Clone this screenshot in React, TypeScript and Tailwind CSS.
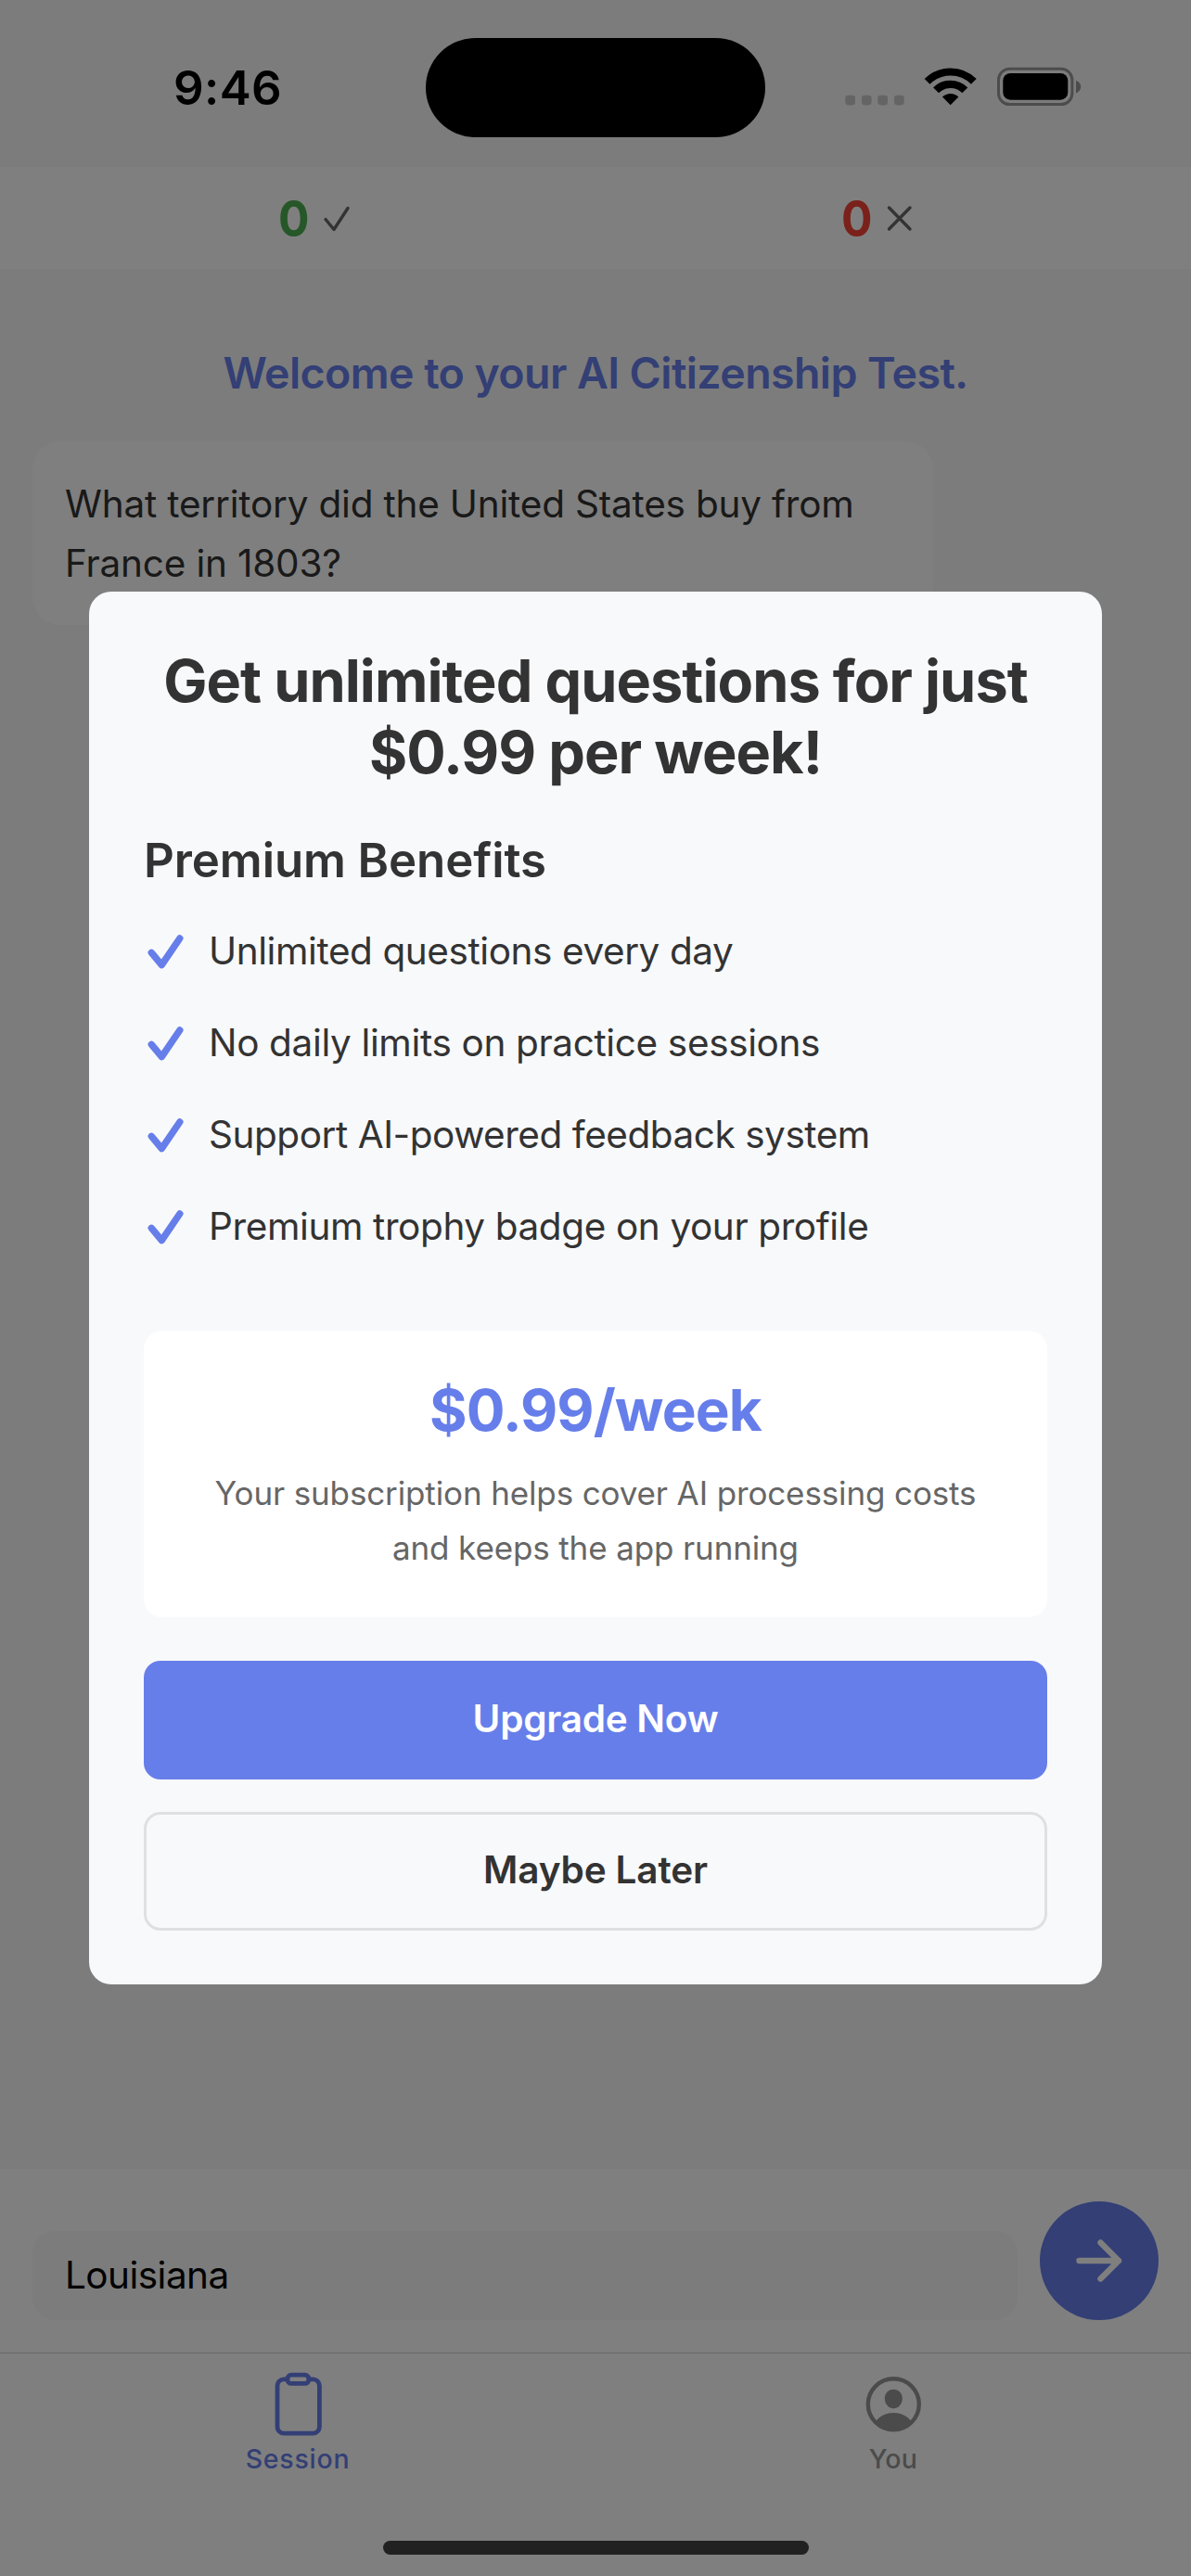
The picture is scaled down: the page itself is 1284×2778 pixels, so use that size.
import React from "react";

const BENEFITS = [
  { text: "Unlimited questions every day", tracking: "tracking-[-0.42px]" },
  { text: "No daily limits on practice sessions", tracking: "tracking-[-0.36px]" },
  { text: "Support AI-powered feedback system", tracking: "tracking-[-0.46px]" },
  { text: "Premium trophy badge on your profile", tracking: "tracking-[-0.39px]" },
];

function StatusIcons() {
  return (
    <svg width="280" height="70" viewBox="0 0 280 70" fill="none">
      <g fill="#c8c8c8">
        <rect x="11.3" y="42.7" width="10.7" height="10.7" rx="3.3" />
        <rect x="28.9" y="42.7" width="10.7" height="10.7" rx="3.3" />
        <rect x="46.3" y="42.7" width="10.7" height="10.7" rx="3.3" />
        <rect x="64" y="42.7" width="10.7" height="10.7" rx="3.3" />
      </g>
      <path d="M99.6 27.9A35.5 35.5 0 0 1 149.8 27.9" stroke="#000" strokeWidth="8.2" />
      <path d="M109.1 37.4A22 22 0 0 1 140.3 37.4" stroke="#000" strokeWidth="8.4" />
      <path d="M116 44.6A12.3 12.3 0 0 1 133.4 44.6L124.7 53.3Z" fill="#000" />
      <rect x="176.5" y="14.2" width="79.4" height="38.4" rx="12" stroke="#999" strokeWidth="3" />
      <rect x="181.3" y="19" width="70" height="28.7" rx="8" fill="#000" />
      <path d="M260 26.7C267 29 267 38 260 40.4Z" fill="#999" />
    </svg>
  );
}

function StatusBar() {
  return (
    <div className="grid h-[180px] shrink-0 grid-cols-[459px_366px_459px] bg-[#f8f8f8]">
      <div className="pt-[65px] pl-[187px] text-[51px] leading-[60px] font-semibold tracking-[0.38px] text-black">
        9:46
      </div>
      <div className="mt-[40.5px] h-[107px] rounded-full bg-black" />
      <div className="pt-[60px] pl-[75px]">
        <StatusIcons />
      </div>
    </div>
  );
}

function ScoreBar() {
  return (
    <div className="flex h-[110px] shrink-0 bg-white pt-[24.5px] pl-[300px]">
      <div className="flex w-[607px]">
        <span className="w-[45px] origin-left scale-x-92 text-[54px] leading-[62px] font-bold text-[#4caf50]">0</span>
        <svg width="36" height="62" viewBox="0 0 36 62" fill="none" stroke="#666" strokeWidth="3.4" strokeLinecap="round" strokeLinejoin="round">
          <path d="M6 31.5L15 42.5L30 19.5" />
        </svg>
      </div>
      <div className="flex">
        <span className="w-[45px] origin-left scale-x-92 text-[54px] leading-[62px] font-bold text-[#f44336]">0</span>
        <svg width="36" height="62" viewBox="0 0 36 62" fill="none" stroke="#666" strokeWidth="3.4" strokeLinecap="round">
          <path d="M6.5 19L29 42M29 19L6.5 42" />
        </svg>
      </div>
    </div>
  );
}

function Composer() {
  return (
    <div className="flex h-[198px] shrink-0 items-end gap-[24px] bg-white pr-[35px] pb-[35px] pl-[35px]">
      <div className="flex h-[96px] flex-1 items-center rounded-[24px] bg-[#f8f8f8] pl-[35px] text-[40.5px] tracking-[-0.54px] text-black">
        Louisiana
      </div>
      <button className="flex h-[128px] w-[128px] items-center justify-center rounded-full bg-[#667eea]">
        <svg width="64" height="64" viewBox="0 0 64 64" fill="none" stroke="#fff" strokeWidth="6.4" strokeLinecap="round" strokeLinejoin="round">
          <path d="M10.5 32H53M33.5 12.5L53 32L33.5 51.5" />
        </svg>
      </button>
    </div>
  );
}

function TabBar() {
  return (
    <div className="h-[241px] shrink-0 border-t border-[#d2d2d2] bg-white">
      <div className="grid h-[202px] grid-cols-2 pt-[18px] text-[28.5px] leading-[36px] font-medium">
        <div className="flex flex-col items-center text-[#667eea]">
          <svg width="64" height="74" viewBox="0 0 64 74" fill="none" stroke="currentColor" strokeWidth="4.8">
            <rect x="10" y="9.8" width="45.4" height="58.4" rx="7" />
            <rect x="21" y="5.2" width="22.8" height="9.2" rx="4" fill="#fff" />
          </svg>
          <span className="mt-[4px] tracking-[0.75px]">Session</span>
        </div>
        <div className="flex flex-col items-center text-[#969696]">
          <svg width="64" height="74" viewBox="0 0 64 74" fill="none">
            <circle cx="32.3" cy="36.8" r="27.5" stroke="currentColor" strokeWidth="4.4" />
            <path d="M22.8 30.6C22.8 24.6 27 20.7 32.3 20.7S41.8 24.6 41.8 30.6C41.8 36.4 37.6 41.4 32.3 41.4S22.8 36.4 22.8 30.6Z" fill="currentColor" />
            <path d="M13.2 55C18 49 25 46 32.3 46S46.6 49 51.4 55A27 27 0 0 1 13.2 55Z" fill="currentColor" />
          </svg>
          <span className="mt-[4px] tracking-[0.3px]">You</span>
        </div>
      </div>
      <div className="mx-auto h-[15px] w-[459px] rounded-full bg-[#424242]" />
    </div>
  );
}

function UpgradeDialog() {
  return (
    <div className="h-[1502px] w-[1092px] rounded-[24px] bg-[#f8f9fb] px-[59px] pt-[58px] text-[#333]">
      <h1 className="text-center text-[63px] leading-[77px] font-bold tracking-[-0.95px]">
        Get unlimited questions for just
        <br />
        $0.99 per week!
      </h1>
      <h2 className="mt-[47px] text-[51px] leading-[61px] font-semibold tracking-[-0.11px]">Premium Benefits</h2>
      <ul className="mt-[36px] flex flex-col gap-[35px]">
        {BENEFITS.map((b) => (
          <li key={b.text} className="flex h-[64px] gap-[22px] text-[40.5px] leading-[64px]">
            <svg width="48" height="64" viewBox="0 0 48 64" fill="none" stroke="#667eea" strokeWidth="7.4" strokeLinecap="round" strokeLinejoin="round">
              <path d="M8.3 33.4L19.3 46.6L38.8 18" />
            </svg>
            <span className={b.tracking}>{b.text}</span>
          </li>
        ))}
      </ul>
      <div className="mt-[80px] h-[309px] rounded-[20px] bg-white pt-[48px] text-center">
        <div className="text-[62px] leading-[75px] font-bold tracking-[-0.9px] text-[#667eea]">$0.99/week</div>
        <p className="mt-[23px] text-[35px] leading-[58.5px] tracking-[-0.13px] text-[#666]">
          Your subscription helps cover AI processing costs
          <br />
          and keeps the app running
        </p>
      </div>
      <button className="mt-[47px] flex h-[128px] w-full items-center justify-center rounded-[18px] bg-[#667eea] pb-px text-[40.5px] font-semibold tracking-[-0.25px] text-white">
        Upgrade Now
      </button>
      <button className="mt-[35px] flex h-[128px] w-full items-center justify-center rounded-[18px] border-[3px] border-[#dfe0e1] pb-px text-[40.5px] font-semibold tracking-[-0.13px]">
        Maybe Later
      </button>
    </div>
  );
}

export default function App() {
  return (
    <div className="relative flex h-[2778px] w-[1284px] flex-col overflow-hidden bg-[#f8f8f8] font-['Inter',sans-serif]">
      <StatusBar />
      <ScoreBar />
      <main className="flex-1 pt-[83.5px]">
        <div className="text-center text-[46.5px] leading-[56px] font-semibold tracking-[-0.58px] text-[#667eea]">
          Welcome to your AI Citizenship Test.
        </div>
        <div className="mt-[46.5px] ml-[35px] h-[198px] w-[971px] rounded-[30px] bg-white pt-[36px] pl-[35px] text-[40.5px] leading-[64.3px] tracking-[-0.2px] text-[#333]">
          What territory did the United States buy from
          <br />
          France in 1803?
        </div>
      </main>
      <Composer />
      <TabBar />
      <div className="absolute inset-0 flex items-center justify-center bg-black/50">
        <UpgradeDialog />
      </div>
    </div>
  );
}
